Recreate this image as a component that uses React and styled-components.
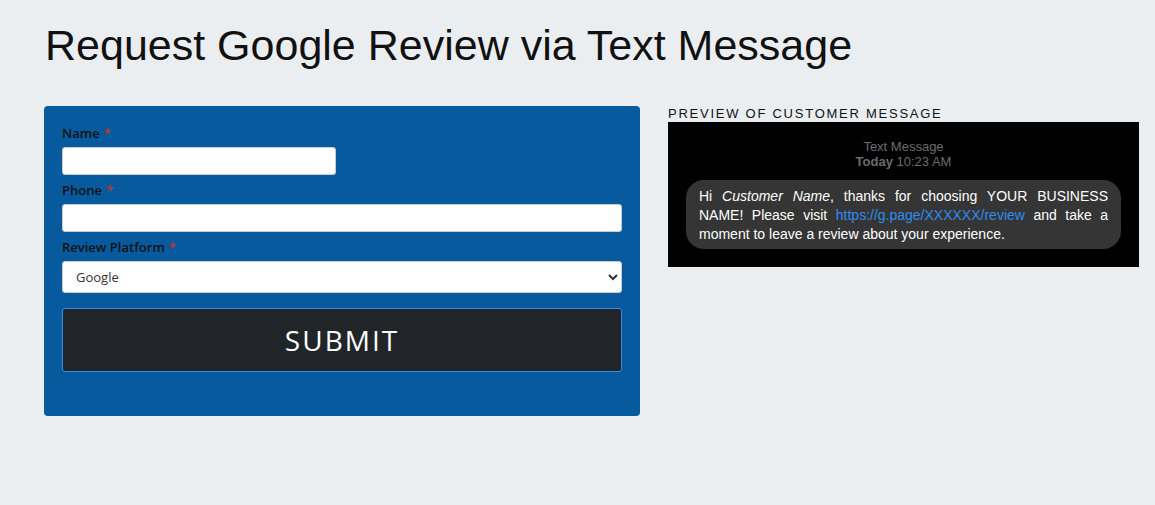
import React from 'react'
import styled, { createGlobalStyle } from 'styled-components'

const GlobalStyle = createGlobalStyle`
  html, body {
    margin: 0;
    padding: 0;
    background: #ebeef1;
  }
  body {
    font-family: "Liberation Sans", Arial, sans-serif;
  }
`

const Page = styled.div`
  padding: 14px 16px 0 44px;
`

const Title = styled.h1`
  margin: 0 0 30px 1px;
  font-family: "Liberation Sans", Arial, sans-serif;
  font-weight: 400;
  font-size: 43px;
  line-height: 62px;
  color: #111;
`

const Row = styled.div`
  display: flex;
  align-items: flex-start;
  gap: 28px;
`

const FormPanel = styled.form`
  width: 596px;
  box-sizing: border-box;
  background: #065a9d;
  border-radius: 4px;
  padding: 16px 18px 44px;
  display: flex;
  flex-direction: column;
`

const Label = styled.label`
  font-family: "Open Sans", sans-serif;
  font-weight: 600;
  font-size: 13px;
  line-height: 22px;
  color: #111;
  margin-top: ${p => (p.first ? '0' : '4px')};
  margin-bottom: 3px;
`

const Req = styled.span`
  color: #c9302c;
  margin-left: 4px;
`

const Input = styled.input`
  box-sizing: border-box;
  width: ${p => p.width || '100%'};
  height: 28px;
  border: 1px solid #ccc;
  border-radius: 3px;
  background: #fff;
  padding: 0 10px;
  font-size: 13px;
  outline: none;
`

const Select = styled.select`
  box-sizing: border-box;
  width: 100%;
  height: 32px;
  border: 1px solid #ccc;
  border-radius: 3px;
  background: #fff;
  padding: 0 9px;
  font-family: "Open Sans", sans-serif;
  font-size: 13px;
  color: #333;
  outline: none;
`

const SubmitButton = styled.button`
  margin-top: 15px;
  height: 64px;
  background: #212529;
  border: 1px solid #3d8bd9;
  border-radius: 3px;
  color: #fff;
  font-family: "Open Sans", sans-serif;
  font-size: 28px;
  letter-spacing: 2px;
  cursor: pointer;
`

const PreviewColumn = styled.div`
  width: 471px;
  display: flex;
  flex-direction: column;
`

const PreviewHeading = styled.div`
  font-family: "Liberation Sans", Arial, sans-serif;
  font-size: 13px;
  letter-spacing: 1.75px;
  line-height: 16px;
  color: #111;
`

const Phone = styled.div`
  background: #000;
  padding: 17px 18px 18px;
  display: flex;
  flex-direction: column;
  align-items: center;
`

const Meta = styled.div`
  text-align: center;
  color: #6c6c6c;
  font-size: 13px;
  line-height: 15px;
  b {
    font-weight: 700;
  }
`

const Bubble = styled.div`
  margin-top: 11px;
  align-self: stretch;
  background: #353535;
  border-radius: 18px;
  padding: 7px 13px 5px;
  color: #fff;
  font-size: 14px;
  line-height: 19px;
  text-align: justify;
  a {
    color: #2d8cf0;
    text-decoration: none;
  }
`

const App = () => {
  return (
    <>
      <GlobalStyle />
      <Page>
        <Title>Request Google Review via Text Message</Title>
        <Row>
          <FormPanel onSubmit={e => e.preventDefault()}>
            <Label first htmlFor="name">Name<Req>*</Req></Label>
            <Input id="name" type="text" width="274px" />
            <Label htmlFor="phone">Phone<Req>*</Req></Label>
            <Input id="phone" type="tel" />
            <Label htmlFor="platform">Review Platform<Req>*</Req></Label>
            <Select id="platform" defaultValue="google">
              <option value="google">Google</option>
              <option value="facebook">Facebook</option>
            </Select>
            <SubmitButton type="submit">SUBMIT</SubmitButton>
          </FormPanel>
          <PreviewColumn>
            <PreviewHeading>PREVIEW OF CUSTOMER MESSAGE</PreviewHeading>
            <Phone>
              <Meta>
                Text Message
                <br />
                <b>Today</b> 10:23 AM
              </Meta>
              <Bubble>
                Hi <i>Customer Name</i>, thanks for choosing YOUR BUSINESS NAME! Please visit{' '}
                <a href="#review">https://g.page/XXXXXX/review</a> and take a moment to leave a
                review about your experience.
              </Bubble>
            </Phone>
          </PreviewColumn>
        </Row>
      </Page>
    </>
  )
}

export default App
